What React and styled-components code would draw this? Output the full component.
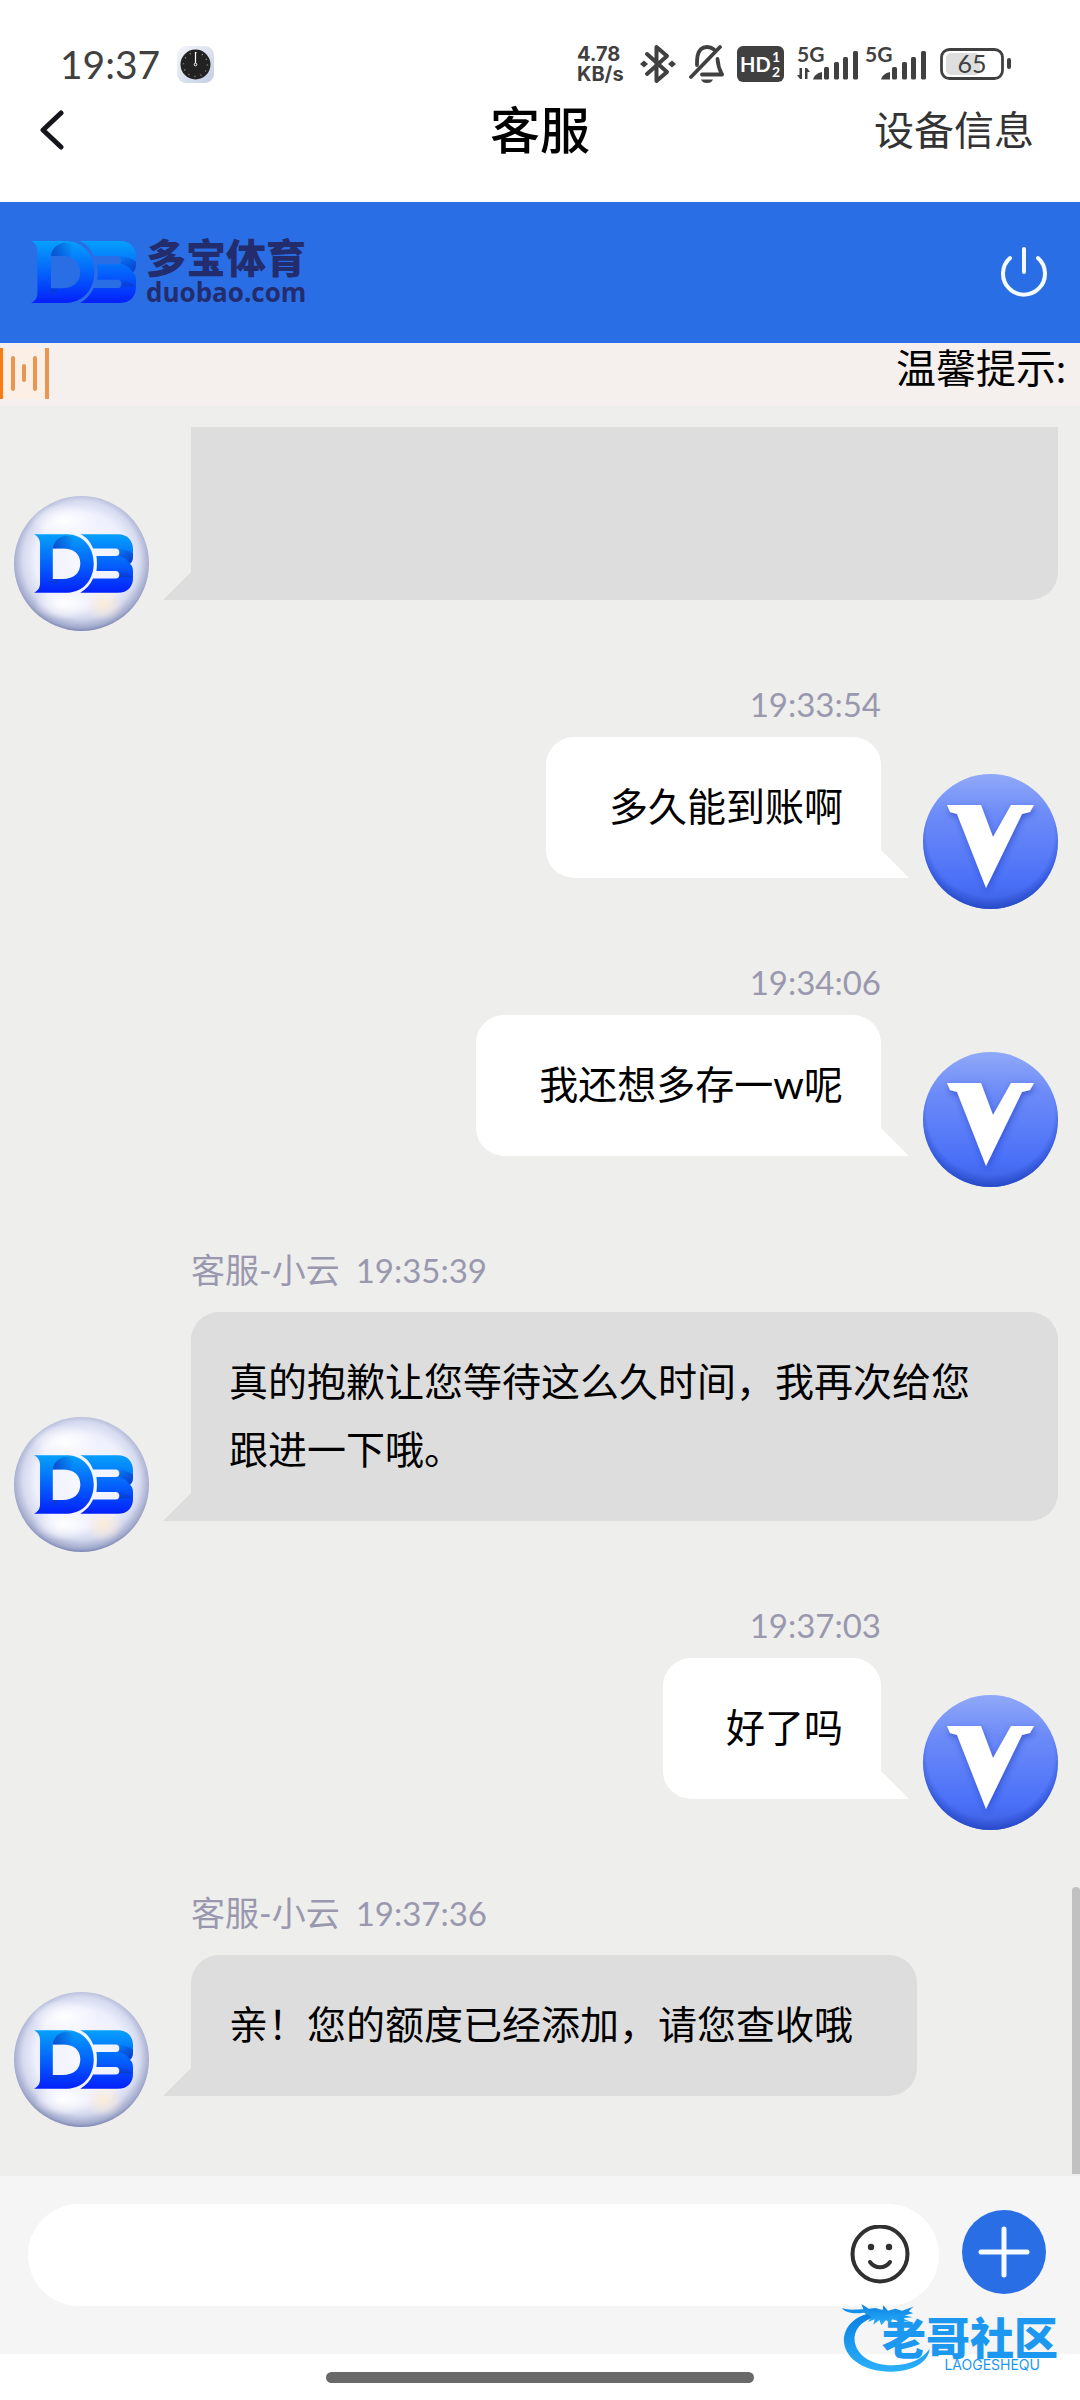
import React, { useState } from "react";
import styled, { createGlobalStyle } from "styled-components";

const messages = [
	{ id: 1, from: "agent", text: "", time: "" },
	{ id: 2, from: "me", text: "多久能到账啊", time: "19:33:54" },
	{ id: 3, from: "me", text: "我还想多存一w呢", time: "19:34:06" },
	{
		id: 4,
		from: "agent",
		name: "客服-小云",
		text: "真的抱歉让您等待这么久时间，我再次给您跟进一下哦。",
		time: "19:35:39",
	},
	{ id: 5, from: "me", text: "好了吗", time: "19:37:03" },
	{
		id: 6,
		from: "agent",
		name: "客服-小云",
		text: "亲！您的额度已经添加，请您查收哦",
		time: "19:37:36",
	},
];

const ClockIcon = () => (
	<svg width="37" height="37" viewBox="0 0 37 37" aria-hidden="true">
		<defs>
			<linearGradient id="clockBg" x1="0" y1="0" x2="1" y2="1">
				<stop offset="0" stopColor="#f4f6fa" />
				<stop offset="1" stopColor="#c3cee4" />
			</linearGradient>
		</defs>
		<rect width="37" height="37" rx="9" fill="url(#clockBg)" />
		<circle cx="18.5" cy="18.5" r="15" fill="#222" />
		<circle
			cx="18.5"
			cy="18.5"
			r="12"
			fill="none"
			stroke="#999"
			strokeWidth="1.4"
			strokeDasharray="1 5.283"
		/>
		<path d="M18.5 6v11" stroke="#fff" strokeWidth="1.2" />
		<circle cx="18.5" cy="18.5" r="1.3" fill="#222" stroke="#fff" />
	</svg>
);

const BluetoothIcon = () => (
	<svg width="36" height="40" viewBox="0 0 36 40" aria-hidden="true">
		<path
			d="M7 10 27 28 16.500 37V3L27 12 7 30"
			fill="none"
			stroke="#404040"
			strokeWidth="4"
			strokeLinejoin="round"
			strokeLinecap="round"
		/>
		<path d="M0 20l4-3.500 4 3.500-4 3.500zM28 20l4-3.500 4 3.500-4 3.500z" fill="#404040" />
	</svg>
);

const MutedIcon = () => (
	<svg width="35" height="40" viewBox="0 0 35 40" aria-hidden="true">
		<g fill="none" stroke="#404040" strokeWidth="3.8" strokeLinecap="round">
			<path d="M31 3 2 33" />
			<path d="M8 21c0-3 0-6 .500-9C10 5 14 3 18 3c3 0 5 .800 7 2.400" />
			<path d="M28.500 15c.300 5 1.500 10 4.500 15.500H13" strokeLinejoin="round" />
		</g>
		<path d="M12 35.500h12c-1 2.500-3 3.500-6 3.500s-5-1-6-3.500z" fill="#404040" />
	</svg>
);

const HdIcon = () => (
	<svg width="47" height="36" viewBox="0 0 47 36" role="img" aria-label="HD 1 2">
		<rect width="47" height="36" rx="6" fill="#404040" />
		<g fill="#fff" fontFamily="Lato, sans-serif" fontWeight="700">
			<text x="3" y="26" fontSize="20">HD</text>
			<text x="35" y="16" fontSize="14">1</text>
			<text x="35" y="31" fontSize="14">2</text>
		</g>
	</svg>
);

const SignalIcon = ({ active }) => (
	<svg width="62" height="48" viewBox="0 -5 62 48" role="img" aria-label="5G">
		<g fill="#404040">
			<text x="0" y="17" fontSize="21" fontFamily="Lato, sans-serif" fontWeight="700">
				5G
			</text>
			{active && <path d="M5 23v11h-2l-3-4h2.500v-7zM8 34V23h2l3 4h-2.500v7z" />}
			<path d="M16 34.500c1-4 4-6.500 9-7.500v7.500z" />
			<rect x="27" y="22" width="5" height="12.500" rx="1.500" />
			<rect x="37" y="17" width="5" height="17.500" rx="1.500" />
			<rect x="46" y="12" width="5" height="22.500" rx="1.500" />
			<rect x="56" y="6" width="5" height="28.500" rx="1.500" />
		</g>
	</svg>
);

const BatteryIcon = () => (
	<svg width="71" height="32" viewBox="0 0 71 32" role="img" aria-label="65%">
		<rect x="6" y="5" width="34" height="22" rx="5" fill="#dedede" />
		<rect
			x="1.500"
			y="1.500"
			width="61"
			height="29"
			rx="8"
			fill="none"
			stroke="#404040"
			strokeWidth="2.800"
		/>
		<rect x="67" y="10" width="4" height="11" rx="2" fill="#404040" />
		<text
			x="32"
			y="25"
			textAnchor="middle"
			fontSize="25"
			fontFamily="Lato, sans-serif"
			fill="#404040"
		>
			65
		</text>
	</svg>
);

const BrandMark = ({ width, height }) => (
	<svg width={width} height={height} viewBox="0 0 295 174" aria-hidden="true">
		<defs>
			<linearGradient id="brandFill" x1="0" y1="0" x2="0" y2="1">
				<stop offset="0" stopColor="#06a0fb" />
				<stop offset="0.5" stopColor="#0463fb" />
				<stop offset="1" stopColor="#0420fb" />
			</linearGradient>
			<linearGradient id="brandFold" x1="0" y1="0" x2="1" y2="0">
				<stop offset="0" stopColor="#0a3cc0" stopOpacity="0.75" />
				<stop offset="1" stopColor="#0a3cc0" stopOpacity="0" />
			</linearGradient>
			<linearGradient id="brandFoldRight" x1="0" y1="0" x2="1" y2="1">
				<stop offset="0" stopColor="#0a3cc0" stopOpacity="0" />
				<stop offset="1" stopColor="#0a34b8" stopOpacity="0.8" />
			</linearGradient>
		</defs>
		<path
			fill="url(#brandFill)"
			fillRule="evenodd"
			d="M0 0H100C150 2 178 42 178 87S150 172 100 174H0C12 168 18 160 18 145V30C18 15 12 6 0 0ZM56 42V133H85C120 133 138 115 138 87S120 42 85 42Z"
		/>
		<path
			fill="url(#brandFill)"
			d="M138 0H250C280 0 295 20 295 45V65C295 78 291 84 286 88C291 92 295 98 295 110V130C295 155 280 174 250 174H138C156 164 168 150 176 132H243A11 11 0 0 0 243 109H186C188 95 188 80 186 65H243A11 11 0 0 0 243 42H176C168 22 156 8 138 0Z"
		/>
		<path fill="url(#brandFold)" d="M56 42C58 24 70 10 92 4L120 8 110 46C102 43 95 42 85 42Z" />
		<path fill="url(#brandFold)" d="M56 133V152L84 133Z" />
		<path fill="url(#brandFoldRight)" d="M243 42C262 42 284 48 295 58V66C295 78 291 84 286 88C278 74 265 66 250 64C256 58 255 46 243 42Z" />
		<path fill="url(#brandFoldRight)" d="M243 109C262 109 280 114 290 128C278 128 262 128 250 130C256 122 254 112 243 109Z" />
	</svg>
);

const AgentPicture = () => (
	<svg width="135" height="135" viewBox="0 0 135 135" role="img" aria-label="客服">
		<defs>
			<radialGradient id="orb" cx="0.5" cy="0.47" r="0.53">
				<stop offset="0" stopColor="#f7f8ff" />
				<stop offset="0.65" stopColor="#eef0fd" />
				<stop offset="0.82" stopColor="#d6daef" />
				<stop offset="0.95" stopColor="#a3abcd" />
				<stop offset="1" stopColor="#7f88b4" />
			</radialGradient>
			<radialGradient id="orbShine">
				<stop offset="0" stopColor="#fff" />
				<stop offset="1" stopColor="#fff" stopOpacity="0" />
			</radialGradient>
			<radialGradient id="orbWarm">
				<stop offset="0" stopColor="#fbecd8" />
				<stop offset="1" stopColor="#fbecd8" stopOpacity="0" />
			</radialGradient>
		</defs>
		<circle cx="67.500" cy="67.500" r="67.500" fill="url(#orb)" />
		<ellipse cx="50" cy="25" rx="34" ry="17" fill="url(#orbShine)" />
		<ellipse cx="50" cy="108" rx="30" ry="16" fill="url(#orbShine)" />
		<ellipse cx="90" cy="108" rx="19" ry="17" fill="url(#orbWarm)" />
		<g transform="translate(20 38)">
			<BrandMark width="99" height="59" />
		</g>
	</svg>
);

const MemberPicture = () => (
	<svg width="135" height="135" viewBox="0 0 135 135" role="img" aria-label="V">
		<defs>
			<linearGradient id="memberBg" x1="0" y1="0" x2="0" y2="1">
				<stop offset="0" stopColor="#90a9f8" />
				<stop offset="0.3" stopColor="#6d8bf8" />
				<stop offset="0.8" stopColor="#4a70f7" />
				<stop offset="1" stopColor="#3c60e0" />
			</linearGradient>
			<radialGradient id="memberEdge" cx="0.5" cy="0.44" r="0.56">
				<stop offset="0.84" stopColor="#2446c4" stopOpacity="0" />
				<stop offset="1" stopColor="#2446c4" stopOpacity="0.85" />
			</radialGradient>
			<filter id="memberShadow" x="-20%" y="-20%" width="140%" height="140%">
				<feDropShadow dx="1" dy="3" stdDeviation="3" floodColor="#1c3ec0" floodOpacity="0.6" />
			</filter>
		</defs>
		<circle cx="67.500" cy="67.500" r="67.500" fill="url(#memberBg)" />
		<circle cx="67.500" cy="67.500" r="67.500" fill="url(#memberEdge)" />
		<path
			filter="url(#memberShadow)"
			fill="#fff"
			d="M24 31H58L70 63 88 31H111L107 38 99 40 63 114 34 40 27 38Z"
		/>
	</svg>
);

const DragonMark = () => (
	<svg width="100" height="70" viewBox="0 0 300 210" aria-hidden="true">
		<defs>
			<linearGradient id="dragon" x1="0" y1="0" x2="0" y2="1">
				<stop offset="0" stopColor="#0a80e0" />
				<stop offset="1" stopColor="#2bb0fb" />
			</linearGradient>
		</defs>
		<g fill="url(#dragon)">
			<path d="M84 28C30 40 4 75 6 115C12 170 75 205 150 203C215 201 258 175 263 135C240 165 205 182 155 184C90 186 44 155 38 112C34 80 56 52 96 40Z" />
			<path d="M0 12C20 20 45 16 64 16L58 0 80 14 100 12 122 18 124 4 138 20 160 14 180 20 214 8 200 22 214 28 188 34 212 40 180 43 208 54 166 50 150 46 146 60 132 48 118 64 112 48 94 62 98 46 78 54 88 38 66 26C38 30 10 28 0 12Z" />
		</g>
	</svg>
);

const App = () => {
	const [draft, setDraft] = useState("");

	return (
		<Page lang="zh-CN">
			<GlobalStyle />
			<StatusBar>
				<StatusGroup>
					<Clock>19:37</Clock>
					<ClockIcon />
				</StatusGroup>
				<StatusGroup>
					<NetSpeed>
						<span>4.78</span>
						<span>KB/s</span>
					</NetSpeed>
					<BluetoothIcon />
					<MutedIcon />
					<HdIcon />
					<SignalPair>
						<SignalIcon active />
						<SignalIcon />
					</SignalPair>
					<BatteryIcon />
				</StatusGroup>
			</StatusBar>

			<NavBar>
				<BackButton type="button" aria-label="返回">
					<svg width="24" height="40" viewBox="0 0 24 40" aria-hidden="true">
						<path
							d="M21 3 3 20l18 17"
							fill="none"
							stroke="#15151c"
							strokeWidth="5"
							strokeLinecap="round"
							strokeLinejoin="round"
						/>
					</svg>
				</BackButton>
				<Title>客服</Title>
				<DeviceLink href="#device">设备信息</DeviceLink>
			</NavBar>

			<BrandBar>
				<Brand>
					<BrandMark width="105" height="62" />
					<BrandText>
						<strong>多宝体育</strong>
						<span>duobao.com</span>
					</BrandText>
				</Brand>
				<PlainButton type="button" aria-label="退出">
					<svg width="46" height="50" viewBox="0 0 46 50" aria-hidden="true">
						<path
							d="M23 2v23M9 11a21 21 0 1 0 28 0"
							fill="none"
							stroke="#f4faff"
							strokeWidth="4"
							strokeLinecap="round"
						/>
					</svg>
				</PlainButton>
			</BrandBar>

			<Notice>
				<svg width="50" height="51" viewBox="0 0 50 51" aria-hidden="true">
					<rect width="50" height="51" fill="#fcf0e6" />
					<rect width="3" height="51" fill="#fb7a12" />
					<g fill="#ea9650">
						<rect x="11" y="8" width="4" height="35" rx="2" />
						<rect x="22" y="16" width="4" height="18" rx="2" />
						<rect x="33" y="8" width="4" height="35" rx="2" />
						<rect x="45" width="4" height="51" />
					</g>
				</svg>
				<p>温馨提示:</p>
			</Notice>

			<Chat>
				<MessageList>
					{messages.map(({ id, from, name, text, time }) => (
						<Message key={id} $mine={from === "me"}>
							{from === "me" ? <MemberPicture /> : <AgentPicture />}
							<Content $mine={from === "me"}>
								{time && (
									<Meta $mine={from === "me"}>
										{name && <span>{name}</span>}
										<time>{time}</time>
									</Meta>
								)}
								<Bubble $mine={from === "me"} $blank={!text}>
									{text}
								</Bubble>
							</Content>
						</Message>
					))}
				</MessageList>
				<ScrollThumb />
			</Chat>

			<Composer onSubmit={(e) => e.preventDefault()}>
				<Field>
					<input
						type="text"
						aria-label="消息"
						value={draft}
						onChange={(e) => setDraft(e.target.value)}
					/>
					<PlainButton type="button" aria-label="表情">
						<svg width="60" height="60" viewBox="0 0 60 60" aria-hidden="true">
							<g fill="none" stroke="#303030" strokeWidth="4" strokeLinecap="round">
								<circle cx="30" cy="29" r="27.500" />
								<path d="M20 37c5 7 15 7 20 0" />
							</g>
							<circle cx="21" cy="22" r="3.200" fill="#303030" />
							<circle cx="39" cy="22" r="3.200" fill="#303030" />
						</svg>
					</PlainButton>
				</Field>
				<AddButton type="button" aria-label="更多">
					<svg width="52" height="52" viewBox="0 0 52 52" aria-hidden="true">
						<path
							d="M26 3v46M3 26h46"
							stroke="#f4faff"
							strokeWidth="5"
							strokeLinecap="round"
						/>
					</svg>
				</AddButton>
				<Watermark>
					<DragonMark />
					<WatermarkText>
						<strong>老哥社区</strong>
						<span>LAOGESHEQU</span>
					</WatermarkText>
				</Watermark>
			</Composer>

			<GestureArea>
				<i />
			</GestureArea>
		</Page>
	);
};

export default App;

const GlobalStyle = createGlobalStyle`
	* {
		box-sizing: border-box;
	}
	body {
		margin: 0;
		background: #fff;
		font-family: Lato, "Noto Sans CJK SC", sans-serif;
		font-size: 39px;
		color: #000;
	}
	p, h1 {
		margin: 0;
	}
	svg {
		display: block;
		flex-shrink: 0;
	}
`;

const Page = styled.div`
	display: flex;
	flex-direction: column;
	height: 100vh;
`;

const StatusBar = styled.div`
	display: flex;
	justify-content: space-between;
	align-items: flex-end;
	padding: 44px 69px 0 60px;
	color: #404040;
`;

const StatusGroup = styled.div`
	display: flex;
	align-items: center;
	gap: 13px;
	height: 40px;
`;

const Clock = styled.span`
	margin-right: 4px;
	font-size: 39px;
	line-height: 40px;
`;

const NetSpeed = styled.span`
	display: flex;
	flex-direction: column;
	min-width: 50px;
	font-family: Inter, sans-serif;
	font-size: 20px;
	font-weight: 700;
	line-height: 20px;
`;

const SignalPair = styled.span`
	display: flex;
	gap: 6px;
`;

const NavBar = styled.header`
	display: grid;
	grid-template-columns: 1fr auto 1fr;
	align-items: center;
	height: 118px;
	padding: 0 40px 26px;
`;

const PlainButton = styled.button`
	display: flex;
	padding: 0;
	border: 0;
	background: none;
	cursor: pointer;
`;

const BackButton = styled(PlainButton)`
	justify-self: start;
`;

const Title = styled.h1`
	font-size: 50px;
	font-weight: 500;
	line-height: 60px;
`;

const DeviceLink = styled.a`
	justify-self: end;
	padding-right: 6px;
	color: #333;
	font-size: 40px;
	line-height: 60px;
	text-decoration: none;
`;

const BrandBar = styled.div`
	display: flex;
	align-items: center;
	justify-content: space-between;
	height: 141px;
	padding: 0 33px 2px 31px;
	background: #2a6ee6;
`;

const Brand = styled.div`
	display: flex;
	align-items: center;
	gap: 10px;
`;

const BrandText = styled.div`
	display: flex;
	flex-direction: column;
	color: #232c6c;

	strong {
		font-size: 40px;
		font-weight: 900;
		line-height: 40px;
	}
	span {
		font-family: "Open Sans", sans-serif;
		font-size: 26px;
		font-weight: 700;
		line-height: 28px;
	}
`;

const Notice = styled.div`
	display: flex;
	align-items: flex-start;
	justify-content: space-between;
	height: 63px;
	padding: 5px 14px 0 0;
	background: #f5f0ed;

	p {
		font-size: 40px;
		line-height: 40px;
	}
`;

const Chat = styled.main`
	position: relative;
	display: flex;
	flex: 1;
	flex-direction: column;
	min-height: 0;
	padding-top: 21px;
	background: #eeeeec;
`;

const MessageList = styled.div`
	display: flex;
	flex: 1;
	flex-direction: column;
	justify-content: flex-end;
	gap: 49px;
	min-height: 0;
	padding: 0 22px 49px 14px;
	overflow: hidden;
`;

const Message = styled.article`
	display: flex;
	flex-direction: ${({ $mine }) => ($mine ? "row-reverse" : "row")};
	flex-shrink: 0;
	align-items: flex-end;
	gap: 42px;
	padding-top: ${({ $mine }) => ($mine ? "0" : "10px")};
`;

const Content = styled.div`
	display: flex;
	flex: 1;
	flex-direction: column;
	align-items: ${({ $mine }) => ($mine ? "flex-end" : "flex-start")};
	min-width: 0;
	padding-bottom: 31px;
`;

const Meta = styled.p`
	display: flex;
	gap: 16px;
	margin-bottom: ${({ $mine }) => ($mine ? "9px" : "18px")};
	color: #9a98ae;
	font-size: 34px;
	line-height: 48px;

	time {
		font-size: 33px;
	}
`;

const Bubble = styled.div`
	position: relative;
	width: ${({ $blank }) => ($blank ? "100%" : "auto")};
	min-height: ${({ $blank }) => ($blank ? "240px" : "0")};
	padding: ${({ $mine }) => ($mine ? "35px 38px 38px 63px" : "35px 64px 38px 38px")};
	border-radius: ${({ $mine }) => ($mine ? "28px 28px 0 28px" : "28px 28px 28px 0")};
	background: ${({ $mine }) => ($mine ? "#fff" : "#dddddd")};
	line-height: 68px;

	&::after {
		content: "";
		position: absolute;
		bottom: 0;
		${({ $mine }) => ($mine ? "left: 100%" : "right: 100%")};
		width: 28px;
		height: 28px;
		background: inherit;
		clip-path: ${({ $mine }) =>
			$mine ? "polygon(0 0, 100% 100%, 0 100%)" : "polygon(100% 0, 100% 100%, 0 100%)"};
	}
`;

const ScrollThumb = styled.span`
	position: absolute;
	right: 0;
	bottom: 2px;
	width: 8px;
	height: 287px;
	border-radius: 4px 4px 0 0;
	background: #c1c1c1;
`;

const Composer = styled.form`
	position: relative;
	display: flex;
	align-items: flex-start;
	gap: 23px;
	padding: 28px 34px 48px 28px;
	background: #f5f5f5;
`;

const Field = styled.div`
	display: flex;
	flex: 1;
	align-items: center;
	height: 102px;
	padding: 0 29px 0 40px;
	border-radius: 51px;
	background: #fff;

	input {
		flex: 1;
		min-width: 0;
		border: 0;
		outline: 0;
		background: none;
		font: inherit;
	}
`;

const AddButton = styled(PlainButton)`
	align-items: center;
	justify-content: center;
	width: 84px;
	height: 84px;
	margin-top: 6px;
	border-radius: 50%;
	background: #2a6ee6;
`;

const Watermark = styled.div`
	position: absolute;
	right: 18px;
	bottom: -20px;
	display: flex;
	width: 220px;
	color: #1c98f0;
	pointer-events: none;
`;

const WatermarkText = styled.div`
	display: flex;
	flex-direction: column;
	align-items: flex-end;
	margin: 14px 0 0 -60px;

	strong {
		font-size: 44px;
		font-weight: 900;
		line-height: 40px;
	}
	span {
		margin-right: 18px;
		font-family: Inter, sans-serif;
		font-size: 14px;
		line-height: 14px;
	}
`;

const GestureArea = styled.footer`
	display: flex;
	justify-content: center;
	padding: 18px 0 17px;

	i {
		width: 428px;
		height: 11px;
		border-radius: 6px;
		background: #696969;
	}
`;
